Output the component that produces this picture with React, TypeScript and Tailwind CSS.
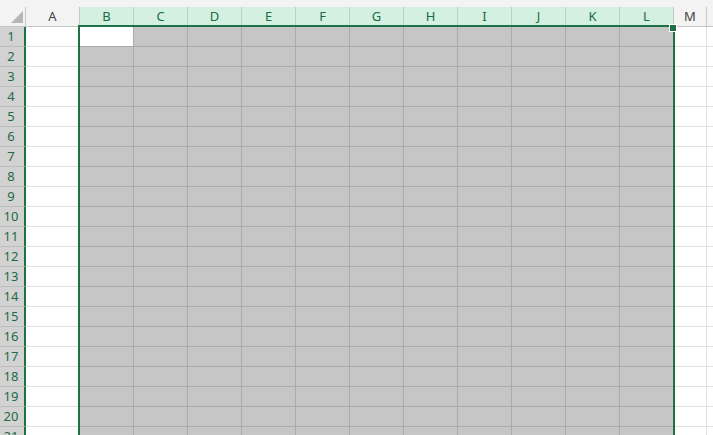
type Col = { label: string; width: string; selected: boolean };

const cols: Col[] = [
  { label: "A", width: "w-[54px]", selected: false },
  ...["B", "C", "D", "E", "F", "G", "H", "I", "J", "K", "L"].map((l) => ({
    label: l,
    width: "w-[54px]",
    selected: true,
  })),
  { label: "M", width: "w-[33px]", selected: false },
];

const rows = Array.from({ length: 21 }, (_, i) => i + 1);

const App: React.FC = () => {
  return (
    <div
      className="relative w-[713px] h-[435px] overflow-hidden bg-white select-none"
      style={{ fontFamily: '"Noto Sans", "Open Sans", sans-serif' }}
    >
      {/* strip above the column headers */}
      <div className="h-[7px] bg-[#f3f3f3]" />

      {/* column headers */}
      <div className="flex h-[20px] bg-[#f3f3f3]">
        <div className="w-[26px] shrink-0 flex items-end justify-end pr-[2px] pb-[3px] border-r border-b border-[#c6c6c6]">
          <svg width="12" height="12" viewBox="0 0 12 12">
            <polygon points="12,0 12,12 0,12" fill="#b6b6b6" />
          </svg>
        </div>
        {cols.map((c) => (
          <div
            key={c.label}
            className={`${c.width} shrink-0 flex items-center justify-center text-[13px] leading-none border-r border-b ${
              c.selected
                ? "bg-[#d3f0e0] text-[#1a6b3f] border-r-[#bfcfc5] border-b-[#c6c6c6]"
                : "text-[#444444] border-[#c6c6c6]"
            }`}
          >
            {c.label}
          </div>
        ))}
        <div className="flex-1 border-b border-[#c6c6c6]" />
      </div>

      {/* body rows */}
      {rows.map((r) => (
        <div key={r} className="flex h-[20px]">
          <div className="w-[26px] shrink-0 flex items-center justify-center pr-[2px] bg-[#d2d2d2] text-[#1e6b45] text-[13px] leading-none border-r-2 border-r-[#1e7145] border-b border-b-[#bdbdbd]">
            {r}
          </div>
          {cols.map((c) => {
            const active = r === 1 && c.label === "B";
            let cls = "bg-white border-[#e1e1e1]";
            if (c.selected && !active) cls = "bg-[#c6c6c6] border-[#ababab]";
            if (active) cls = "bg-white border-r-[#ababab] border-b-[#ababab]";
            return (
              <div
                key={c.label}
                className={`${c.width} shrink-0 border-r border-b ${cls}`}
              />
            );
          })}
          <div className="flex-1 border-b border-[#e1e1e1]" />
        </div>
      ))}

      {/* selection outline B1:L */}
      <div className="absolute left-[78px] top-[25px] w-[597px] bottom-[-10px] border-2 border-[#1e7145] pointer-events-none" />
      {/* fill handle */}
      <div className="absolute left-[669px] top-[24px] w-[8px] h-[8px] bg-[#1e7145] border border-white" />
    </div>
  );
};

export default App;
